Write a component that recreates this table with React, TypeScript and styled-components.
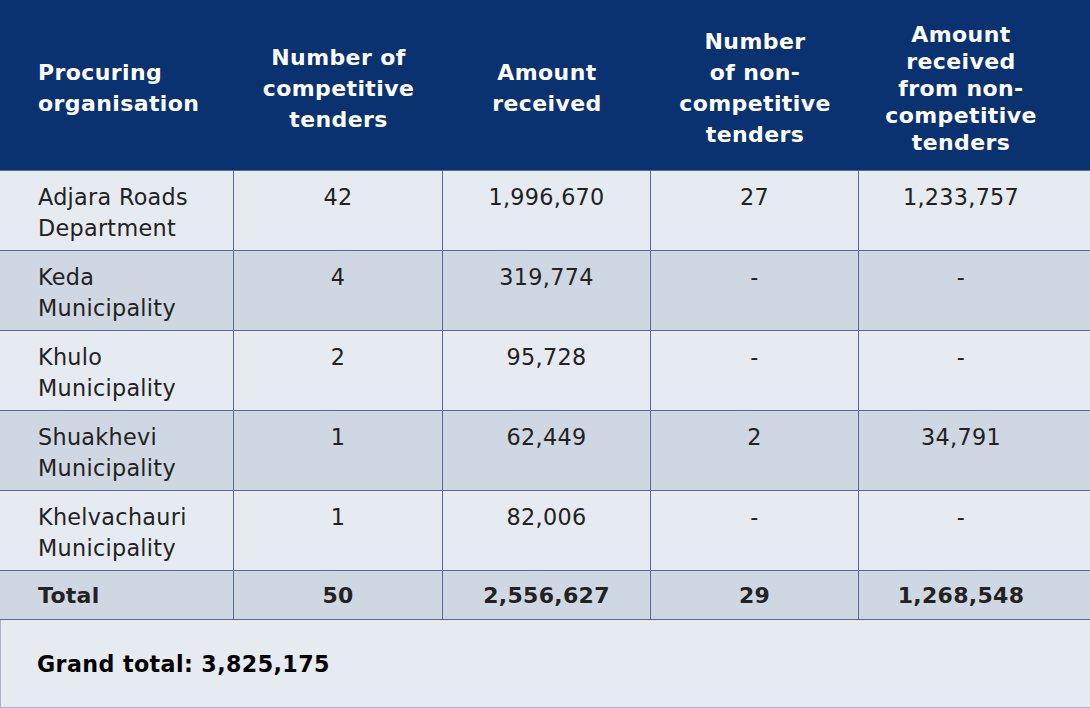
import styled, { createGlobalStyle } from "styled-components";

const GlobalStyle = createGlobalStyle`
  html, body {
    margin: 0;
    padding: 0;
    background: #e6ebf2;
  }
  * {
    box-sizing: border-box;
  }
`;

const Wrapper = styled.div`
  width: 1090px;
  height: 708px;
  font-family: "DejaVu Sans", Verdana, sans-serif;
  background: #e6ebf2;
`;

const Grid = styled.div`
  display: grid;
  grid-template-columns: 234px 209px 208px 208px 231px;
`;

const HeadCell = styled.div<{ $left?: boolean; $tight?: boolean; $last?: boolean }>`
  height: 171px;
  background: #0a3170;
  color: #ffffff;
  font-weight: bold;
  font-size: 22px;
  line-height: ${(p) => (p.$tight ? "27px" : "31px")};
  letter-spacing: 0.4px;
  display: flex;
  align-items: center;
  justify-content: ${(p) => (p.$left ? "flex-start" : "center")};
  text-align: ${(p) => (p.$left ? "left" : "center")};
  padding: ${(p) => (p.$left ? "6px 0 0 38px" : p.$last ? "6px 27px 0 0" : "6px 0 0 0")};
  border-bottom: 1px solid #5a6a94;
`;

const Cell = styled.div<{ $left?: boolean; $dark?: boolean; $last?: boolean; $total?: boolean }>`
  height: ${(p) => (p.$total ? "49px" : "80px")};
  background: ${(p) => (p.$dark ? "#cfd7e3" : "#e6ebf2")};
  color: #222222;
  font-size: ${(p) => (p.$total ? "22px" : "22.3px")};
  font-weight: ${(p) => (p.$total ? "bold" : "normal")};
  line-height: 31px;
  letter-spacing: 0.3px;
  text-align: ${(p) => (p.$left ? "left" : "center")};
  padding: ${(p) => (p.$total ? "9px" : "11px")} ${(p) => (p.$last ? "27px" : "0")} 0
    ${(p) => (p.$left ? "38px" : "0")};
  border-bottom: 1px solid #5a6a94;
  border-right: ${(p) => (p.$last ? "none" : "1px solid #5a6a94")};
`;

const GrandTotal = styled.div`
  height: 88px;
  display: flex;
  align-items: center;
  padding-left: 36px;
  font-size: 22.2px;
  font-weight: bold;
  letter-spacing: 0.4px;
  color: #000000;
  border-left: 1px solid #a9b3c9;
  border-bottom: 1px solid #a9b3c9;
`;

const headers = [
  ["Procuring", "organisation"],
  ["Number of", "competitive", "tenders"],
  ["Amount", "received"],
  ["Number", "of non-", "competitive", "tenders"],
  ["Amount", "received", "from non-", "competitive", "tenders"],
];

const rows = [
  [["Adjara Roads", "Department"], "42", "1,996,670", "27", "1,233,757"],
  [["Keda", "Municipality"], "4", "319,774", "-", "-"],
  [["Khulo", "Municipality"], "2", "95,728", "-", "-"],
  [["Shuakhevi", "Municipality"], "1", "62,449", "2", "34,791"],
  [["Khelvachauri", "Municipality"], "1", "82,006", "-", "-"],
] as const;

const totals = ["Total", "50", "2,556,627", "29", "1,268,548"];

const lines = (parts: readonly string[]) =>
  parts.map((t, i) => (
    <span key={i}>
      {t}
      {i < parts.length - 1 && <br />}
    </span>
  ));

export default function App() {
  return (
    <Wrapper>
      <GlobalStyle />
      <Grid>
        {headers.map((h, i) => (
          <HeadCell key={i} $left={i === 0} $tight={i === 4} $last={i === 4}>
            <div>{lines(h)}</div>
          </HeadCell>
        ))}
        {rows.map((r, ri) =>
          r.map((c, ci) => (
            <Cell key={`${ri}-${ci}`} $left={ci === 0} $dark={ri % 2 === 1} $last={ci === 4}>
              {typeof c === "string" ? c : lines(c)}
            </Cell>
          ))
        )}
        {totals.map((c, ci) => (
          <Cell key={`t-${ci}`} $left={ci === 0} $dark $total $last={ci === 4}>
            {c}
          </Cell>
        ))}
      </Grid>
      <GrandTotal>Grand total: 3,825,175</GrandTotal>
    </Wrapper>
  );
}
